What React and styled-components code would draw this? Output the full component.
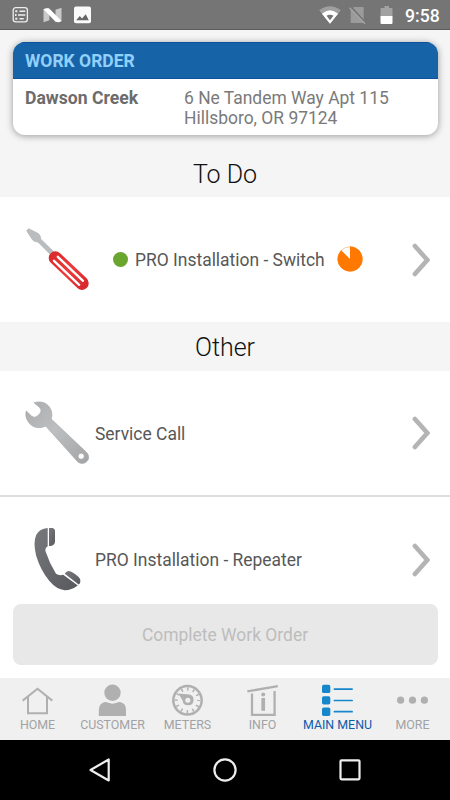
import React from "react";
import styled, { createGlobalStyle } from "styled-components";

const GlobalStyle = createGlobalStyle`
  * {
    box-sizing: border-box;
  }
  body {
    margin: 0;
    background: #fff;
    font-family: Roboto, "Liberation Sans", sans-serif;
  }
  svg {
    display: block;
    flex: none;
  }
`;

const Screen = styled.div`
  display: flex;
  flex-direction: column;
  width: 450px;
  height: 800px;
  overflow: hidden;
`;

const StatusBar = styled.header`
  display: flex;
  align-items: center;
  justify-content: space-between;
  flex: none;
  height: 30px;
  padding: 0 10px 0 11px;
  background: #757575;
  border-bottom: 1px solid #5c5c5c;
`;

const StatusGroup = styled.div`
  display: flex;
  align-items: center;
`;

const Clock = styled.span`
  width: 35px;
  margin-left: 12px;
  padding-top: 2px;
  color: #fff;
  font-size: 17.6px;
  font-weight: 500;
  line-height: 30px;
  white-space: nowrap;
`;

const Content = styled.main`
  position: relative;
  flex: none;
  height: 648px;
  overflow: hidden;
  background: #fff;
`;

const Summary = styled.div`
  height: 119px;
  padding: 12.4px 12.5px 0;
  background: #f5f5f5;
`;

const Card = styled.section`
  height: 93px;
  overflow: hidden;
  border-radius: 12px;
  background: #fff;
  box-shadow: 0 1px 7px rgba(0, 0, 0, 0.38);
`;

const CardTitle = styled.h1`
  height: 36.5px;
  margin: 0;
  padding-left: 12.5px;
  background: #1763a8;
  border: solid #0f509f;
  border-width: 1px 0;
  color: #90d0fb;
  font-size: 17.5px;
  font-weight: 700;
  line-height: 37px;
`;

const CardBody = styled.div`
  display: grid;
  grid-template-columns: 159px 1fr;
  padding: 9.4px 0 0 12.5px;
  color: #7a7a7a;
  font-size: 17.45px;
  line-height: 20.2px;
`;

const Name = styled.strong`
  font-size: 17.6px;
  font-weight: 700;
  color: #6c6c6c;
`;

const SectionTitle = styled.h2`
  height: ${props => props.height}px;
  margin: 0;
  background: #f5f5f5;
  color: #111;
  font-size: 25px;
  font-weight: 300;
  line-height: 52px;
  text-align: center;
`;

const Row = styled.div`
  display: flex;
  align-items: center;
  height: ${props => props.height}px;
  padding: 0 20px 0 24.5px;
  border-bottom: ${props => (props.divided ? "2px solid #dedede" : "none")};
`;

const RowIcon = styled.div`
  width: 70.5px;
  padding-bottom: 1px;
`;

const RowLabel = styled.span`
  color: #575757;
  font-size: 17.45px;
  line-height: 24px;
  white-space: nowrap;
  padding-top: 1px;
`;

const Dot = styled.span`
  width: 15px;
  height: 15px;
  margin: 0 7.5px 1px 17.5px;
  border-radius: 50%;
  background: #6aa52d;
`;

const PieWrap = styled.div`
  margin-left: 12px;
  padding-bottom: 1px;
`;

const ChevronWrap = styled.div`
  margin-left: auto;
`;

const CompleteButton = styled.button`
  position: absolute;
  left: 12.5px;
  right: 12.5px;
  bottom: 13px;
  height: 61px;
  padding: 0;
  border: 0;
  border-radius: 8px;
  background: #e8e8e8;
  color: #bdbdbd;
  font: 400 17.45px Roboto, "Liberation Sans", sans-serif;
`;

const TabBar = styled.nav`
  display: grid;
  grid-template-columns: repeat(6, 75px);
  flex: none;
  height: 62px;
  background: #f0f0f0;
`;

const Tab = styled.a`
  display: flex;
  flex-direction: column;
  align-items: center;
  padding-top: 5px;
  color: ${props => (props.active ? "#0d5cab" : "#a0a3a5")};
  font-size: 12.4px;
  line-height: 16px;
  white-space: nowrap;

  svg {
    margin-bottom: -1px;
  }
`;

const SystemBar = styled.footer`
  display: grid;
  grid-template-columns: repeat(3, 125px);
  justify-content: center;
  justify-items: center;
  align-items: center;
  flex: none;
  height: 60px;
  background: #000;
`;

const NotificationIcons = () => (
  <svg width="84" height="30" viewBox="11 0 84 30">
    <rect x="13.2" y="7.7" width="14.2" height="14.2" rx="2.6" fill="none" stroke="#eee" strokeWidth="1.3" />
    <path d="M19.5 11.2h5.8M18 15h7.3M19.5 18.8h4.2" stroke="#eee" strokeWidth="1.6" />
    <path d="M15.3 11.2h2M15 15h1.5M15.3 18.8h2" stroke="#eee" strokeWidth="1.9" />
    <path d="M43.5 9.3 49.4 8v12.3l-5.9 2zM55.5 9.7l6-2V21l-6 1.3z" fill="#c9c9c9" />
    <path d="M43.5 9.3c2.5-1.6 5.2-1.6 7 .5l11 11.2c-2.3 1.7-5 1.7-6.9-.2z" fill="#fff" />
    <rect x="74" y="6.5" width="17" height="16.7" rx="2" fill="#fafafa" />
    <path d="m76.2 20.3 3.6-4.4 2.2 2.5 3.7-4.2 3.1 6.1z" fill="#666" />
  </svg>
);

const SystemIcons = () => (
  <svg width="77" height="30" viewBox="316.5 0 77 30">
    <path d="M319.7 10.3Q330.5 2 341.3 10.3L330.5 23.7z" fill="#9f9f9f" />
    <path d="M322.4 13.7q8.1-7 16.2 0l-8.1 10z" fill="#fff" />
    <path d="M327 15.7q3.5-1.8 7 0l-3.5 4.6z" fill="#757575" />
    <path d="M354.4 7H363q1.2 0 1.2 1.2V23h-13V10.2z" fill="#9b9b9b" />
    <path d="m351.2 6.7 14.5 15.8" stroke="#757575" strokeWidth="2" />
    <path d="m350 7.7 15.5 16" stroke="#a4a4a4" strokeWidth="1.5" />
    <path d="M385 6h4.5v2H392q1 0 1 1v7h-12V9q0-1 1-1h3z" fill="#a2a2a2" />
    <path d="M381 16h12v6.8q0 1.2-1 1.2h-10q-1 0-1-1.2z" fill="#fff" />
  </svg>
);

const ScrewdriverIcon = () => (
  <svg width="64" height="64" viewBox="24 227 64 64">
    <defs>
      <linearGradient id="handle" gradientUnits="userSpaceOnUse" x1="48" y1="252" x2="87" y2="289">
        <stop offset="0" stopColor="#d8292b" />
        <stop offset=".5" stopColor="#ec3b3b" />
        <stop offset="1" stopColor="#d4252b" />
      </linearGradient>
    </defs>
    <path
      d="m27.6 228.2 9.5 4.8q3 2.2 3 6l12.8 12.6-3.4 3.4-12.6-12.6q-3.8 0-5.7-2.3l-6-9.3z"
      fill="#b9bdbf"
    />
    <path d="M54.4 258 81 283.2" fill="none" stroke="url(#handle)" strokeWidth="13.4" strokeLinecap="round" />
    <path
      d="M56.8 256.8 82 280.8M53 260.8 78.2 284.8"
      fill="none"
      stroke="#fff"
      strokeWidth="2.3"
      strokeLinecap="round"
    />
  </svg>
);

const WrenchIcon = () => (
  <svg width="64" height="64" viewBox="24 401 64 64">
    <defs>
      <linearGradient id="steel" x1="0" y1="0" x2="1" y2="1">
        <stop offset="0" stopColor="#aaacae" />
        <stop offset=".45" stopColor="#bdbebf" />
        <stop offset="1" stopColor="#a2a4a6" />
      </linearGradient>
    </defs>
    <path
      fillRule="evenodd"
      d="M33 402.7c5-1.5 10.5-1 14.1 2.8 3.6 3.7 4.7 9.1 3.1 13.5l34.7 32.7c3.4 3.2 3.6 7.2.9 9.8-3 2.9-7.4 2.5-10-.7L44.7 426c-5.7 2.7-11.7 2.1-15.9-2.2-3.4-3.5-4.8-8.4-3.5-12.8l5.2 5.1q2.9 2.4 6-.1l2.4-2.5q2.4-2.9 0-5.8zm44.2 53.5a3 3 0 1 0 6 0 3 3 0 1 0-6 0z"
      fill="url(#steel)"
      stroke="#a1a3a5"
      strokeWidth=".6"
    />
  </svg>
);

const PhoneIcon = () => (
  <svg width="64" height="64" viewBox="24 527 64 64">
    <defs>
      <linearGradient id="handset" x1="0" y1="0" x2="1" y2="1">
        <stop offset="0" stopColor="#77797c" />
        <stop offset="1" stopColor="#58595c" />
      </linearGradient>
    </defs>
    <path
      d="M46.7 528v18.3q-2.8 1.6-2.2 5 4 12.2 10.5 22.5 2.8 2 7.2 1l14.6 10.8q-6.7 4.9-13.2 4.7-8-.7-15.2-9.2-9-11-13.3-25.6-3.2-13 .2-20.7 3.2-6 11.4-6.8z"
      fill="url(#handset)"
    />
    <path d="M48 528h3.5q2.5.4 2.5 3v10.5q-.3 3.7-4.3 4.6H48z" fill="url(#handset)" />
    <path d="M63.8 573.8q1.2-2.5 4-2.7 3 .4 9.6 5.6 2.6 2.3 2 5-.3 2-1.8 2.9z" fill="url(#handset)" />
  </svg>
);

const PieIcon = () => (
  <PieWrap>
    <svg width="26" height="26" viewBox="0 0 26 26">
      <circle cx="13" cy="13" r="12.3" fill="#fff" stroke="#ffaf70" strokeWidth=".7" />
      <path d="M13 13V.5A12.5 12.5 0 1 1 4.2 4.2z" fill="#ff7900" />
    </svg>
  </PieWrap>
);

const Chevron = () => (
  <ChevronWrap>
    <svg width="18" height="34" viewBox="0 0 18 34">
      <path d="m2.9 3 12.4 14L2.9 31" fill="none" stroke="#b4b4b4" strokeWidth="4.6" strokeLinecap="round" />
    </svg>
  </ChevronWrap>
);

const TAB_ICONS = {
  home: (
    <g fill="none" stroke="#b0b0b0" strokeWidth="2">
      <path d="M2.7 17.6 17.5 5.8l14.8 11.8" />
      <path d="M8 14v16.2h19V14" />
    </g>
  ),
  customer: (
    <g fill="#b0b0b0">
      <circle cx="17.5" cy="9.8" r="8.2" />
      <path d="M3.8 33v-5.7q.2-7.1 6.2-8.2 1.4-.4 2.6.5 4.9 2.3 9.8 0 1.2-.9 2.6-.5 6 1.1 6 8.2V33z" />
    </g>
  ),
  meters: (
    <g fill="none" stroke="#b0b0b0">
      <circle cx="17.5" cy="17.3" r="14.2" strokeWidth="2.5" />
      <circle
        cx="17.5"
        cy="17.3"
        r="11.3"
        strokeWidth="3.2"
        strokeDasharray="1.5 4.416"
        strokeDashoffset=".75"
      />
      <path d="M8.4 10.4 19.3 11.5a5.5 5.5 0 1 1-6.7 6z" fill="#b0b0b0" stroke="none" />
      <circle cx="17.8" cy="17.3" r="2.5" fill="#f0f0f0" stroke="none" />
    </g>
  ),
  info: (
    <g fill="none" stroke="#b0b0b0">
      <path d="m2.3 8.4 30.5-5.3" strokeWidth="2.4" />
      <path d="M7 10.5v21.3h22.6V8" strokeWidth="2.3" />
      <circle cx="18.2" cy="11.6" r="2" fill="#b0b0b0" stroke="none" />
      <path d="M18.2 15v12.8" strokeWidth="3.7" />
    </g>
  ),
  menu: (
    <g fill="#1687cb">
      <rect x="2" y="1.8" width="8.3" height="8.3" rx="1.7" />
      <rect x="2" y="13.2" width="8.3" height="8.3" rx="1.7" />
      <rect x="2" y="24.6" width="8.3" height="8.3" rx="1.7" />
      <path
        d="M14.4 6.1h17.7M14.4 17.5h17.7M14.4 28.7h17.7"
        stroke="#1687cb"
        strokeWidth="1.7"
        strokeLinecap="round"
      />
    </g>
  ),
  more: (
    <g fill="#b0b0b0">
      <circle cx="5.6" cy="17.2" r="3.6" />
      <circle cx="17.5" cy="17.2" r="3.6" />
      <circle cx="29.4" cy="17.2" r="3.6" />
    </g>
  )
};

const TABS = [
  { icon: "home", label: "HOME" },
  { icon: "customer", label: "CUSTOMER" },
  { icon: "meters", label: "METERS" },
  { icon: "info", label: "INFO" },
  { icon: "menu", label: "MAIN MENU", active: true },
  { icon: "more", label: "MORE" }
];

export default function App() {
  return (
    <Screen>
      <GlobalStyle />
      <StatusBar>
        <NotificationIcons />
        <StatusGroup>
          <SystemIcons />
          <Clock>9:58</Clock>
        </StatusGroup>
      </StatusBar>

      <Content>
        <Summary>
          <Card>
            <CardTitle>WORK ORDER</CardTitle>
            <CardBody>
              <Name>Dawson Creek</Name>
              <div>
                6 Ne Tandem Way Apt 115
                <br />
                Hillsboro, OR 97124
              </div>
            </CardBody>
          </Card>
        </Summary>

        <SectionTitle height={48}>To Do</SectionTitle>
        <Row height={125}>
          <RowIcon>
            <ScrewdriverIcon />
          </RowIcon>
          <Dot />
          <RowLabel>PRO Installation - Switch</RowLabel>
          <PieIcon />
          <Chevron />
        </Row>

        <SectionTitle height={49}>Other</SectionTitle>
        <Row height={126} divided>
          <RowIcon>
            <WrenchIcon />
          </RowIcon>
          <RowLabel>Service Call</RowLabel>
          <Chevron />
        </Row>
        <Row height={125}>
          <RowIcon>
            <PhoneIcon />
          </RowIcon>
          <RowLabel>PRO Installation - Repeater</RowLabel>
          <Chevron />
        </Row>

        <CompleteButton disabled>Complete Work Order</CompleteButton>
      </Content>

      <TabBar>
        {TABS.map(tab => (
          <Tab key={tab.icon} active={tab.active ? 1 : 0}>
            <svg width="35" height="35" viewBox="0 0 35 35">
              {TAB_ICONS[tab.icon]}
            </svg>
            {tab.label}
          </Tab>
        ))}
      </TabBar>

      <SystemBar>
        <svg width="24" height="24" viewBox="0 0 24 24" fill="none" stroke="#eee" strokeWidth="2.2">
          <path d="M20.7 1.5v21L2.5 12z" strokeLinejoin="round" />
        </svg>
        <svg width="24" height="24" viewBox="0 0 24 24" fill="none" stroke="#eee" strokeWidth="2.2">
          <circle cx="12" cy="12" r="10.6" />
        </svg>
        <svg width="24" height="24" viewBox="0 0 24 24" fill="none" stroke="#eee" strokeWidth="2.2">
          <rect x="2.5" y="2.3" width="19" height="19" rx="1" />
        </svg>
      </SystemBar>
    </Screen>
  );
}
